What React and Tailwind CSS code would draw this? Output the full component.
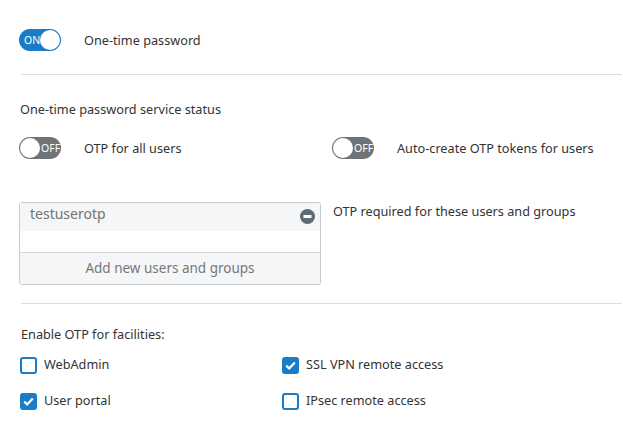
import React, { useState } from "react";

function Toggle({ on, onClick }) {
  return (
    <button
      type="button"
      onClick={onClick}
      className={`relative flex h-[22px] w-[42px] shrink-0 items-center rounded-full ${
        on ? "bg-[#1a7cc6]" : "bg-[#6f7479]"
      }`}
    >
      {on ? (
        <>
          <span className="ml-[5px] mt-px text-[10.5px] leading-none text-white">ON</span>
          <span className="absolute right-[1px] top-[1px] h-[20px] w-[20px] rounded-full bg-white" />
        </>
      ) : (
        <>
          <span className="absolute left-[1px] top-[1px] h-[20px] w-[20px] rounded-full bg-white" />
          <span className="ml-[22px] mt-px text-[10.5px] leading-none text-white">OFF</span>
        </>
      )}
    </button>
  );
}

function Check({ checked, label, onClick }) {
  return (
    <label className="flex h-[18px] items-center cursor-pointer" onClick={onClick}>
      <span
        className={`flex h-[17px] w-[17px] items-center justify-center rounded-[3px] border-2 border-[#1a7cc6] ${
          checked ? "bg-[#1a7cc6]" : "bg-white"
        }`}
      >
        {checked && (
          <svg width="11" height="9" viewBox="0 0 11 9">
            <path d="M1.2 4.6 L4.2 7.4 L9.8 1.6" fill="none" stroke="white" strokeWidth="2.2" />
          </svg>
        )}
      </span>
      <span className="ml-[7px] text-[#333]">{label}</span>
    </label>
  );
}

export default function App() {
  const [otp, setOtp] = useState(true);
  const [allUsers, setAllUsers] = useState(false);
  const [autoCreate, setAutoCreate] = useState(false);
  const [fac, setFac] = useState({ web: false, ssl: true, portal: true, ipsec: false });
  const flip = (k) => setFac((p) => ({ ...p, [k]: !p[k] }));

  return (
    <div className="h-[433px] w-[623px] bg-white text-[12.7px] text-[#333]" style={{ fontFamily: '"Noto Sans", sans-serif' }}>
      <div className="flex items-center pl-[19px] pt-[29px]">
        <Toggle on={otp} onClick={() => setOtp(!otp)} />
        <span className="ml-[23px] mt-px">One-time password</span>
      </div>

      <div className="ml-[21px] mr-px mt-[23px] h-px bg-[#dcdcdc]" />

      <div className="pl-[20px] pt-[25px] leading-[18px]">One-time password service status</div>

      <div className="flex pl-[19px] pt-[19px]">
        <div className="flex w-[313px] items-center">
          <Toggle on={allUsers} onClick={() => setAllUsers(!allUsers)} />
          <span className="ml-[23px] mt-px">OTP for all users</span>
        </div>
        <div className="flex items-center">
          <Toggle on={autoCreate} onClick={() => setAutoCreate(!autoCreate)} />
          <span className="ml-[23px] mt-px">Auto-create OTP tokens for users</span>
        </div>
      </div>

      <div className="flex pl-[19px] pt-[43px]">
        <div className="flex h-[83px] w-[302px] flex-col overflow-hidden rounded-[3px] border border-[#c9ccce]">
          <div className="flex h-[28px] items-start justify-between bg-[#f5f6f7] pl-[10px] pr-[5px]">
            <span className="text-[14px] text-[#737373]">testuserotp</span>
            <svg className="mt-[6px]" width="15" height="15" viewBox="0 0 15 15">
              <circle cx="7.5" cy="7.5" r="7.5" fill="#5f6b74" />
              <rect x="3.5" y="6" width="8" height="3" fill="white" />
            </svg>
          </div>
          <div className="h-[22px] border-b border-[#d6d8da] bg-white" />
          <div className="flex flex-1 items-center justify-center bg-[#f5f6f7] text-[13.5px] text-[#777]">
            Add new users and groups
          </div>
        </div>
        <div className="ml-[12px]">OTP required for these users and groups</div>
      </div>

      <div className="ml-[21px] mr-px mt-[18px] h-px bg-[#dcdcdc]" />

      <div className="pl-[21px] pt-[21px] leading-[18px]">Enable OTP for facilities:</div>

      <div className="grid grid-cols-[262px_1fr] gap-y-[18px] pl-[20px] pt-[13px]">
        <Check checked={fac.web} label="WebAdmin" onClick={() => flip("web")} />
        <Check checked={fac.ssl} label="SSL VPN remote access" onClick={() => flip("ssl")} />
        <Check checked={fac.portal} label="User portal" onClick={() => flip("portal")} />
        <Check checked={fac.ipsec} label="IPsec remote access" onClick={() => flip("ipsec")} />
      </div>
    </div>
  );
}
